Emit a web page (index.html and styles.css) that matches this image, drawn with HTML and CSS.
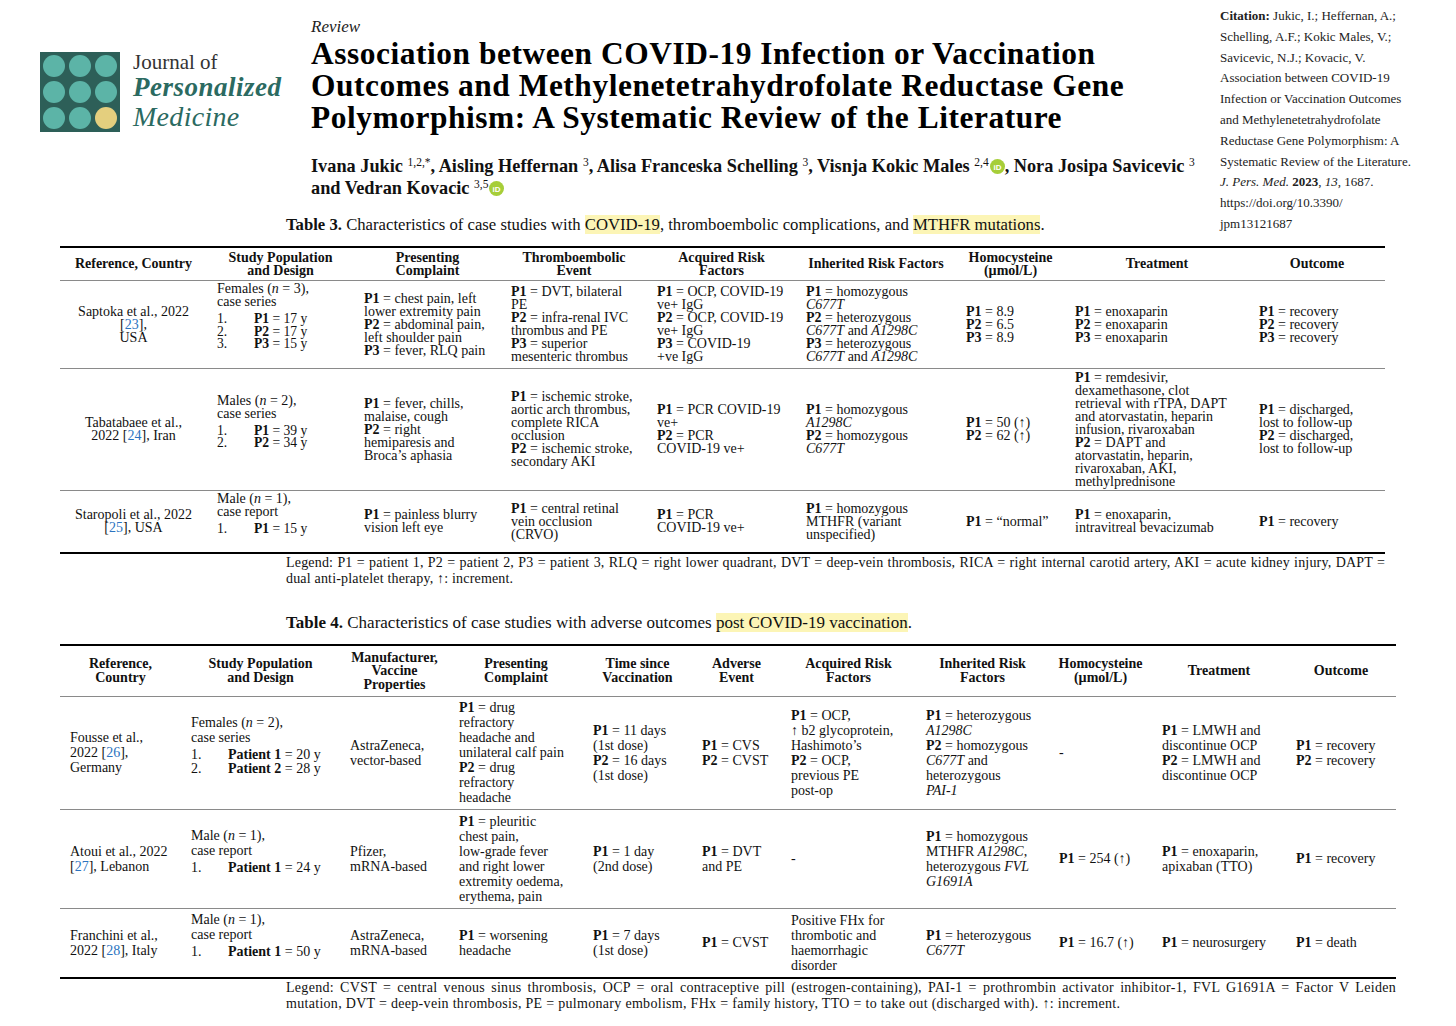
FILE: index.html
```html
<!DOCTYPE html>
<html lang="en">
<head>
<meta charset="utf-8">
<title>Journal of Personalized Medicine – Tables 3 and 4</title>
<link rel="stylesheet" href="styles.css">
</head>
<body>
<div class="page">
  <header class="top">
    <div class="brand">
      <svg class="logo" width="80" height="80" viewBox="0 0 80 80" aria-hidden="true">
        <rect width="80" height="80" fill="#2d5f58"/>
        <circle cx="14" cy="14" r="11" fill="#5cb4a7"/>
        <circle cx="40" cy="14" r="11" fill="#5cb4a7"/>
        <circle cx="66" cy="14" r="11" fill="#5cb4a7"/>
        <circle cx="14" cy="40" r="11" fill="#5cb4a7"/>
        <circle cx="40" cy="40" r="11" fill="#5cb4a7"/>
        <circle cx="66" cy="40" r="11" fill="#5cb4a7"/>
        <circle cx="14" cy="66" r="11" fill="#5cb4a7"/>
        <circle cx="40" cy="66" r="11" fill="#5cb4a7"/>
        <circle cx="66" cy="66" r="11" fill="#e4cf7e"/>
      </svg>
      <div class="brand-text">
        <div class="jof">Journal of</div>
        <div class="jname b">Personalized</div>
        <div class="jname m">Medicine</div>
      </div>
    </div>
    <div class="headline">
      <div class="kind">Review</div>
      <h1 class="title">Association between COVID-19 Infection or Vaccination<br>Outcomes and Methylenetetrahydrofolate Reductase Gene<br>Polymorphism: A Systematic Review of the Literature</h1>
      <p class="authors">Ivana Jukic <sup>1,2,*</sup>, Aisling Heffernan <sup>3</sup>, Alisa Franceska Schelling <sup>3</sup>, Visnja Kokic Males <sup>2,4</sup><svg class="orcid" width="15" height="15" viewBox="0 0 16 16" aria-hidden="true"><circle cx="8" cy="8" r="8" fill="#a6ce39"/><text x="8" y="11.2" text-anchor="middle" font-family="Liberation Sans, sans-serif" font-size="8.5" font-weight="bold" fill="#fff">iD</text></svg>, Nora Josipa Savicevic <sup>3</sup><br>and Vedran Kovacic <sup>3,5</sup><svg class="orcid" width="15" height="15" viewBox="0 0 16 16" aria-hidden="true"><circle cx="8" cy="8" r="8" fill="#a6ce39"/><text x="8" y="11.2" text-anchor="middle" font-family="Liberation Sans, sans-serif" font-size="8.5" font-weight="bold" fill="#fff">iD</text></svg></p>
    </div>
    <aside class="cite">
      <b>Citation:</b> Jukic, I.; Heffernan, A.;<br>
      Schelling, A.F.; Kokic Males, V.;<br>
      Savicevic, N.J.; Kovacic, V.<br>
      Association between COVID-19<br>
      Infection or Vaccination Outcomes<br>
      and Methylenetetrahydrofolate<br>
      Reductase Gene Polymorphism: A<br>
      Systematic Review of the Literature.<br>
      <i>J. Pers. Med.</i> <b>2023</b>, <i>13</i>, 1687.<br>
      https://doi.org/10.3390/<br>
      jpm13121687
    </aside>
  </header>

  <section class="block b3">
    <p class="caption"><b>Table 3.</b> Characteristics of case studies with <mark>COVID-19</mark>, thromboembolic complications, and <mark>MTHFR mutations</mark>.</p>
    <table class="tbl t3">
      <colgroup>
        <col class="c1"><col class="c2"><col class="c3"><col class="c4"><col class="c5"><col class="c6"><col class="c7"><col class="c8"><col class="c9">
      </colgroup>
      <thead>
        <tr class="h">
          <th>Reference, Country</th>
          <th>Study Population<br>and Design</th>
          <th>Presenting<br>Complaint</th>
          <th>Thromboembolic<br>Event</th>
          <th>Acquired Risk<br>Factors</th>
          <th>Inherited Risk Factors</th>
          <th>Homocysteine<br>(µmol/L)</th>
          <th>Treatment</th>
          <th>Outcome</th>
        </tr>
      </thead>
      <tbody>
        <tr class="r1">
          <td class="ref">Saptoka et al., 2022<br>[<a>23</a>],<br>USA</td>
          <td>Females (<i>n</i> = 3),<br>case series
            <div class="list"><span class="n">1.<br>2.<br>3.</span><span><b>P1</b> = 17 y<br><b>P2</b> = 17 y<br><b>P3</b> = 15 y</span></div>
          </td>
          <td><b>P1</b> = chest pain, left<br>lower extremity pain<br><b>P2</b> = abdominal pain,<br>left shoulder pain<br><b>P3</b> = fever, RLQ pain</td>
          <td><b>P1</b> = DVT, bilateral<br>PE<br><b>P2</b> = infra-renal IVC<br>thrombus and PE<br><b>P3</b> = superior<br>mesenteric thrombus</td>
          <td><b>P1</b> = OCP, COVID-19<br>ve+ IgG<br><b>P2</b> = OCP, COVID-19<br>ve+ IgG<br><b>P3</b> = COVID-19<br>+ve IgG</td>
          <td><b>P1</b> = homozygous<br><i>C677T</i><br><b>P2</b> = heterozygous<br><i>C677T</i> and <i>A1298C</i><br><b>P3</b> = heterozygous<br><i>C677T</i> and <i>A1298C</i></td>
          <td><b>P1</b> = 8.9<br><b>P2</b> = 6.5<br><b>P3</b> = 8.9</td>
          <td><b>P1</b> = enoxaparin<br><b>P2</b> = enoxaparin<br><b>P3</b> = enoxaparin</td>
          <td><b>P1</b> = recovery<br><b>P2</b> = recovery<br><b>P3</b> = recovery</td>
        </tr>
        <tr class="r2">
          <td class="ref">Tabatabaee et al.,<br>2022 [<a>24</a>], Iran</td>
          <td>Males (<i>n</i> = 2),<br>case series
            <div class="list"><span class="n">1.<br>2.</span><span><b>P1</b> = 39 y<br><b>P2</b> = 34 y</span></div>
          </td>
          <td><b>P1</b> = fever, chills,<br>malaise, cough<br><b>P2</b> = right<br>hemiparesis and<br>Broca’s aphasia</td>
          <td><b>P1</b> = ischemic stroke,<br>aortic arch thrombus,<br>complete RICA<br>occlusion<br><b>P2</b> = ischemic stroke,<br>secondary AKI</td>
          <td><b>P1</b> = PCR COVID-19<br>ve+<br><b>P2</b> = PCR<br>COVID-19 ve+</td>
          <td><b>P1</b> = homozygous<br><i>A1298C</i><br><b>P2</b> = homozygous<br><i>C677T</i></td>
          <td><b>P1</b> = 50 (↑)<br><b>P2</b> = 62 (↑)</td>
          <td><b>P1</b> = remdesivir,<br>dexamethasone, clot<br>retrieval with rTPA, DAPT<br>and atorvastatin, heparin<br>infusion, rivaroxaban<br><b>P2</b> = DAPT and<br>atorvastatin, heparin,<br>rivaroxaban, AKI,<br>methylprednisone</td>
          <td><b>P1</b> = discharged,<br>lost to follow-up<br><b>P2</b> = discharged,<br>lost to follow-up</td>
        </tr>
        <tr class="r3">
          <td class="ref">Staropoli et al., 2022<br>[<a>25</a>], USA</td>
          <td>Male (<i>n</i> = 1),<br>case report
            <div class="list"><span class="n">1.</span><span><b>P1</b> = 15 y</span></div>
          </td>
          <td><b>P1</b> = painless blurry<br>vision left eye</td>
          <td><b>P1</b> = central retinal<br>vein occlusion<br>(CRVO)</td>
          <td><b>P1</b> = PCR<br>COVID-19 ve+</td>
          <td><b>P1</b> = homozygous<br>MTHFR (variant<br>unspecified)</td>
          <td><b>P1</b> = “normal”</td>
          <td><b>P1</b> = enoxaparin,<br>intravitreal bevacizumab</td>
          <td><b>P1</b> = recovery</td>
        </tr>
      </tbody>
    </table>
    <p class="legend w3"><span class="ln j">Legend: P1 = patient 1, P2 = patient 2, P3 = patient 3, RLQ = right lower quadrant, DVT = deep-vein thrombosis, RICA = right internal carotid artery, AKI = acute kidney injury, DAPT =</span><span class="ln">dual anti-platelet therapy, ↑: increment.</span></p>
  </section>

  <section class="block b4">
    <p class="caption"><b>Table 4.</b> Characteristics of case studies with adverse outcomes <mark>post COVID-19 vaccination</mark>.</p>
    <table class="tbl t4">
      <colgroup>
        <col class="c1"><col class="c2"><col class="c3"><col class="c4"><col class="c5"><col class="c6"><col class="c7"><col class="c8"><col class="c9"><col class="c10"><col class="c11">
      </colgroup>
      <thead>
        <tr class="h">
          <th>Reference,<br>Country</th>
          <th>Study Population<br>and Design</th>
          <th>Manufacturer,<br>Vaccine<br>Properties</th>
          <th>Presenting<br>Complaint</th>
          <th>Time since<br>Vaccination</th>
          <th>Adverse<br>Event</th>
          <th>Acquired Risk<br>Factors</th>
          <th>Inherited Risk<br>Factors</th>
          <th>Homocysteine<br>(µmol/L)</th>
          <th>Treatment</th>
          <th>Outcome</th>
        </tr>
      </thead>
      <tbody>
        <tr class="r1">
          <td>Fousse et al.,<br>2022 [<a>26</a>],<br>Germany</td>
          <td>Females (<i>n</i> = 2),<br>case series
            <div class="list"><span class="n">1.<br>2.</span><span><b>Patient 1</b> = 20 y<br><b>Patient 2</b> = 28 y</span></div>
          </td>
          <td>AstraZeneca,<br>vector-based</td>
          <td><b>P1</b> = drug<br>refractory<br>headache and<br>unilateral calf pain<br><b>P2</b> = drug<br>refractory<br>headache</td>
          <td><b>P1</b> = 11 days<br>(1st dose)<br><b>P2</b> = 16 days<br>(1st dose)</td>
          <td><b>P1</b> = CVS<br><b>P2</b> = CVST</td>
          <td><b>P1</b> = OCP,<br>↑ b2 glycoprotein,<br>Hashimoto’s<br><b>P2</b> = OCP,<br>previous PE<br>post-op</td>
          <td><b>P1</b> = heterozygous<br><i>A1298C</i><br><b>P2</b> = homozygous<br><i>C677T</i> and<br>heterozygous<br><i>PAI-1</i></td>
          <td>-</td>
          <td><b>P1</b> = LMWH and<br>discontinue OCP<br><b>P2</b> = LMWH and<br>discontinue OCP</td>
          <td><b>P1</b> = recovery<br><b>P2</b> = recovery</td>
        </tr>
        <tr class="r2">
          <td>Atoui et al., 2022<br>[<a>27</a>], Lebanon</td>
          <td>Male (<i>n</i> = 1),<br>case report
            <div class="list"><span class="n">1.</span><span><b>Patient 1</b> = 24 y</span></div>
          </td>
          <td>Pfizer,<br>mRNA-based</td>
          <td><b>P1</b> = pleuritic<br>chest pain,<br>low-grade fever<br>and right lower<br>extremity oedema,<br>erythema, pain</td>
          <td><b>P1</b> = 1 day<br>(2nd dose)</td>
          <td><b>P1</b> = DVT<br>and PE</td>
          <td>-</td>
          <td><b>P1</b> = homozygous<br>MTHFR <i>A1298C</i>,<br>heterozygous <i>FVL</i><br><i>G1691A</i></td>
          <td><b>P1</b> = 254 (↑)</td>
          <td><b>P1</b> = enoxaparin,<br>apixaban (TTO)</td>
          <td><b>P1</b> = recovery</td>
        </tr>
        <tr class="r3">
          <td>Franchini et al.,<br>2022 [<a>28</a>], Italy</td>
          <td>Male (<i>n</i> = 1),<br>case report
            <div class="list"><span class="n">1.</span><span><b>Patient 1</b> = 50 y</span></div>
          </td>
          <td>AstraZeneca,<br>mRNA-based</td>
          <td><b>P1</b> = worsening<br>headache</td>
          <td><b>P1</b> = 7 days<br>(1st dose)</td>
          <td><b>P1</b> = CVST</td>
          <td>Positive FHx for<br>thrombotic and<br>haemorrhagic<br>disorder</td>
          <td><b>P1</b> = heterozygous<br><i>C677T</i></td>
          <td><b>P1</b> = 16.7 (↑)</td>
          <td><b>P1</b> = neurosurgery</td>
          <td><b>P1</b> = death</td>
        </tr>
      </tbody>
    </table>
    <p class="legend w4"><span class="ln j">Legend: CVST = central venous sinus thrombosis, OCP = oral contraceptive pill (estrogen-containing), PAI-1 = prothrombin activator inhibitor-1, FVL G1691A = Factor V Leiden</span><span class="ln">mutation, DVT = deep-vein thrombosis, PE = pulmonary embolism, FHx = family history, TTO = to take out (discharged with). ↑: increment.</span></p>
  </section>
</div>
</body>
</html>
```

FILE: styles.css
```css
* { box-sizing: border-box; }

html, body {
  margin: 0;
  padding: 0;
  background: #ffffff;
}

body {
  font-family: "Liberation Serif", "Times New Roman", serif;
  color: #111;
  width: 1456px;
  height: 1026px;
  overflow: hidden;
}

/* ---------- header ---------- */
.top {
  display: flex;
  align-items: flex-start;
  height: 214px;
}

.brand {
  display: flex;
  align-items: flex-start;
  margin-left: 40px;
  margin-top: 52px;
  width: 271px;
}

.logo {
  display: block;
  flex: none;
}

.brand-text {
  margin-left: 13px;
  margin-top: -1px;
}

.jof {
  font-size: 21px;
  line-height: 22px;
  color: #333;
}

.jname {
  font-style: italic;
  color: #2b6a61;
}

.jname.b {
  font-weight: bold;
  font-size: 27px;
  line-height: 28px;
  letter-spacing: 0.5px;
}

.jname.m {
  font-size: 28px;
  line-height: 32px;
  letter-spacing: 0.3px;
}

.headline {
  width: 909px;
  padding-top: 17px;
}

.kind {
  font-size: 17px;
  line-height: 20px;
  font-style: italic;
  color: #222;
}

.title {
  margin: 1px 0 0;
  font-size: 31.4px;
  line-height: 32px;
  letter-spacing: 0.55px;
  font-weight: bold;
  color: #000;
}

.authors {
  margin: 21px 0 0;
  font-size: 18.3px;
  line-height: 22px;
  font-weight: bold;
  color: #111;
  white-space: nowrap;
}

.authors sup {
  font-size: 11.5px;
  font-weight: normal;
  vertical-align: 6px;
  line-height: 0;
}

.orcid {
  display: inline-block;
  vertical-align: -2px;
  margin-left: 1px;
}

.cite {
  padding-top: 6px;
  font-size: 13px;
  line-height: 20.8px;
  color: #222;
  white-space: nowrap;
}

/* ---------- table blocks ---------- */
.caption {
  margin: 0 0 10px 286px;
  font-size: 16.7px;
  line-height: 22px;
  color: #111;
}

.b4 .caption {
  font-size: 17px;
}

mark {
  background: #fcf5b6;
  color: inherit;
}

.tbl {
  border-collapse: collapse;
  table-layout: fixed;
  margin-left: 60px;
  font-size: 14px;
  color: #111;
}

.tbl th {
  font-weight: bold;
  text-align: center;
  vertical-align: middle;
  line-height: 13px;
  padding: 0;
  white-space: nowrap;
  border-top: 2px solid #000;
  border-bottom: 1px solid #8a8a8a;
}

.tbl td {
  vertical-align: middle;
  text-align: left;
  white-space: nowrap;
  padding: 0 2px 0 10px;
  border-bottom: 1px solid #8a8a8a;
}

.tbl tbody tr:last-child td {
  border-bottom: 2px solid #000;
}

.tbl a {
  color: #2b73c0;
}

.t3 { width: 1325px; }
.t3 td { line-height: 13px; }
.t3 td.ref { text-align: center; padding: 0; }
.t3 .c1 { width: 147px; }
.t3 .c2 { width: 147px; }
.t3 .c3 { width: 147px; }
.t3 .c4 { width: 146px; }
.t3 .c5 { width: 149px; }
.t3 .c6 { width: 160px; }
.t3 .c7 { width: 109px; }
.t3 .c8 { width: 184px; }
.t3 .c9 { width: 136px; }
.t3 .h { height: 33px; }
.t3 .r1 { height: 88px; }
.t3 .r2 { height: 122px; }
.t3 .r3 { height: 63px; }

.t4 { width: 1336px; }
.t4 td { line-height: 15px; }
.t4 th { line-height: 13.5px; }
.t4 .c1 { width: 121px; }
.t4 .c2 { width: 159px; }
.t4 .c3 { width: 109px; }
.t4 .c4 { width: 134px; }
.t4 .c5 { width: 109px; }
.t4 .c6 { width: 89px; }
.t4 .c7 { width: 135px; }
.t4 .c8 { width: 133px; }
.t4 .c9 { width: 103px; }
.t4 .c10 { width: 134px; }
.t4 .c11 { width: 110px; }
.t4 .h { height: 51px; }
.t4 .r1 { height: 113px; }
.t4 .r2 { height: 99px; }
.t4 .r3 { height: 70px; }

.list {
  display: flex;
  margin: 5px 0 15px;
  line-height: 12.5px;
  font-size: 13.6px;
}

.t4 .list { line-height: 14px; font-size: 14px; margin-top: 3px; }

.list .n {
  width: 37px;
  flex: none;
}

.legend {
  font-size: 14px;
  line-height: 15.5px;
  color: #111;
  margin: 1px 0 0 286px;
}

.legend .ln { display: block; white-space: nowrap; }
.legend .ln.j {
  text-align: justify;
  text-align-last: justify;
  white-space: normal;
}

.w3 { width: 1099px; letter-spacing: 0.18px; }
.w4 { width: 1110px; letter-spacing: 0.3px; }

.b4 {
  margin-top: 26px;
}
```
